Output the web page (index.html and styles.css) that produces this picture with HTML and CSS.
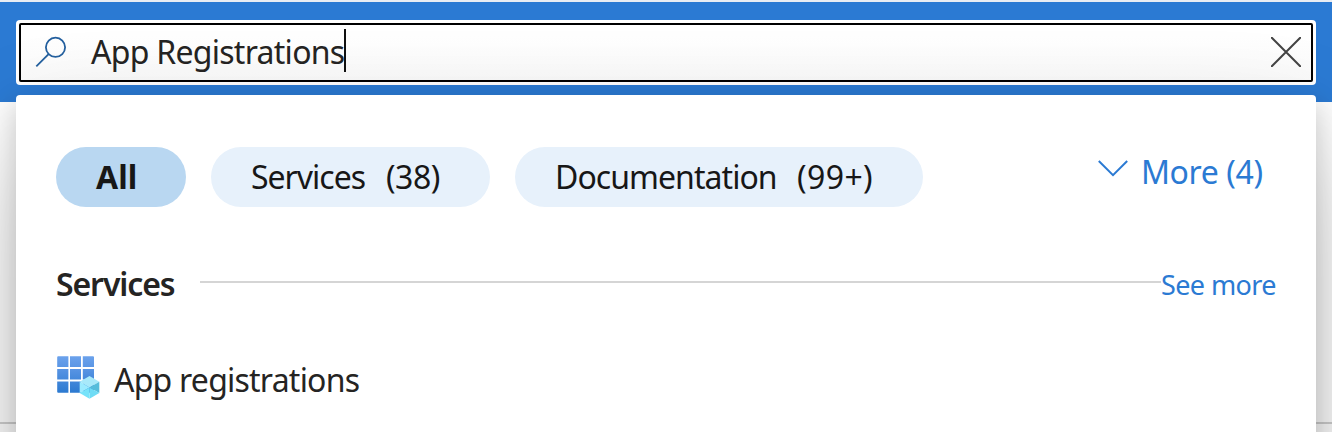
FILE: index.html
```html
<!DOCTYPE html>
<html lang="en">
<head>
<meta charset="utf-8">
<title>Search</title>
<link rel="stylesheet" href="styles.css">
</head>
<body>
<div class="page">
  <header class="topbar">
    <div class="search">
      <div class="search-field">
        <svg class="search-icon" width="32" height="32" viewBox="0 0 32 32"><circle cx="20.5" cy="11.3" r="9.6"/><path d="M13.6 18.1L1.3 30.3"/></svg>
        <span class="query">App Registrations</span><span class="caret"></span>
        <svg class="clear-icon" width="30" height="30" viewBox="0 0 30 30"><path d="M.8.8L29.2 29.2M29.2.8L.8 29.2"/></svg>
      </div>
    </div>
  </header>
  <main class="panel">
    <nav class="filters">
      <span class="pill pill-all"><b class="label-all">All</b></span>
      <span class="pill pill-services"><span class="label-services">Services</span><span class="count-services">(38)</span></span>
      <span class="pill pill-docs"><span class="label-docs">Documentation</span><span class="count-docs">(99+)</span></span>
      <a class="more"><svg width="30" height="18" viewBox="0 0 30 18"><path d="M.8 1L15 15.2L29.2 1"/></svg><span>More (4)</span></a>
    </nav>
    <div class="section-head">
      <h2>Services</h2>
      <span class="rule"></span>
      <a class="see-more">See more</a>
    </div>
    <div class="result">
      <svg width="44" height="44" viewBox="0 0 44 44">
        <defs><linearGradient id="tiles" gradientUnits="userSpaceOnUse" x1="0" y1="0" x2="0" y2="37"><stop offset="0" stop-color="#6ba2ec"/><stop offset=".4" stop-color="#5592e2"/><stop offset="1" stop-color="#2b79d0"/></linearGradient></defs>
        <path fill="url(#tiles)" d="M1.2.2H11.4V11H.2V1.2A1 1 0 0 1 1.2.2ZM13 .2H24V11H13ZM25.8.2H36A1 1 0 0 1 37 1.2V11H25.8ZM.2 13H11.4V23.6H.2ZM13 13H24V23.6H13ZM25.8 13H37V23.6H25.8ZM.2 25.6H11.4V36.7H1.2A1 1 0 0 1 .2 35.7ZM13 25.6H24V36.7H13ZM25.8 25.6H37V36.7H25.8Z"/>
        <path fill="#a8e9fa" d="M32.5 20L42.3 25.8L32.5 31.4L22.7 25.8Z"/>
        <path fill="#56bddb" d="M42.3 25.8V37L32.5 31.4Z"/>
        <path fill="#6fdcf5" d="M42.3 37L32.5 42.8V31.4Z"/>
        <path fill="#9cebff" d="M22.7 25.8L32.5 31.4L22.7 37Z"/>
        <path fill="#76e3fa" d="M22.7 37L32.5 31.4V42.8Z"/>
      </svg>
      <span class="result-name">App registrations</span>
    </div>
  </main>
  <div class="divider"></div>
</div>
</body>
</html>
```
FILE: styles.css
```css
* { box-sizing: border-box; }
body { margin: 0; font-family: "Noto Sans", "Open Sans", sans-serif; font-size: 32px; color: #252423; }
.page { position: relative; width: 1332px; height: 432px; overflow: hidden; background: #fff; }
.topbar { height: 102px; padding: 18px 16px 0; border-top: 2px solid #e9edf3; background: #2b7ad3; }
.search { height: 65px; padding: 3px; border-radius: 4px; background: #fff; }
.search-field { display: flex; align-items: center; height: 59px; padding: 0 10px 2px 14px; border: 2px solid #000; border-radius: 2px; background: linear-gradient(#fff 20%, #fafafa); }
.search-icon { margin-right: 24px; fill: none; stroke: #24609f; stroke-width: 1.8; }
.query { width: 253px; white-space: nowrap; line-height: 44px; letter-spacing: -.72px; }
.caret { width: 2px; height: 43px; margin-top: -3px; background: #111; }
.clear-icon { margin-left: auto; fill: none; stroke: #444; stroke-width: 2; stroke-linecap: round; }
.panel { position: relative; z-index: 1; width: 1300px; height: 640px; margin: -7px 16px 0; padding: 52px 40px 0; border-radius: 4px; background: #fff; box-shadow: 0 51px 115px rgba(0,0,0,.22), 0 10px 29px rgba(0,0,0,.18); }
.filters { display: flex; gap: 25px; height: 60px; color: #171717; }
.pill { display: flex; align-items: center; height: 60px; padding: 0 40px 1px; border-radius: 30px; background: #e7f1fb; white-space: nowrap; }
.pill-all { width: 130px; background: #b9d7f1; }
.pill-services { width: 279px; }
.pill-docs { width: 408px; }
.label-services { width: 135px; letter-spacing: -1px; }
.label-docs { width: 242px; letter-spacing: -.95px; }
.count-services { letter-spacing: -.5px; }
.count-docs { letter-spacing: .4px; }
.more { display: flex; align-items: flex-start; gap: 13px; width: 165px; height: 50px; margin: 0 0 0 auto; color: #2b7ad3; line-height: 50px; letter-spacing: -.4px; white-space: nowrap; }
.more svg { margin: 13px 0 0 -13px; fill: none; stroke: #2b7ad3; stroke-width: 2; }
.section-head { display: flex; align-items: center; height: 44px; margin-top: 56px; }
h2 { width: 144px; margin: -2px 0 0; font-size: 32px; font-weight: 600; line-height: 42px; letter-spacing: -1.1px; }
.rule { flex: 1; height: 2px; margin-top: -6px; background: #d5d5d5; }
.see-more { width: 115px; font-size: 27px; line-height: 40px; letter-spacing: -.6px; color: #2b7ad3; white-space: nowrap; }
.result { display: flex; height: 48px; margin-top: 49px; padding-left: 1px; }
.result svg { width: 44px; }
.result-name { margin-left: 13px; line-height: 48px; letter-spacing: -.77px; white-space: nowrap; }
.divider { width: 1332px; height: 2px; margin-top: -313px; background: #d0d0d0; }
```
